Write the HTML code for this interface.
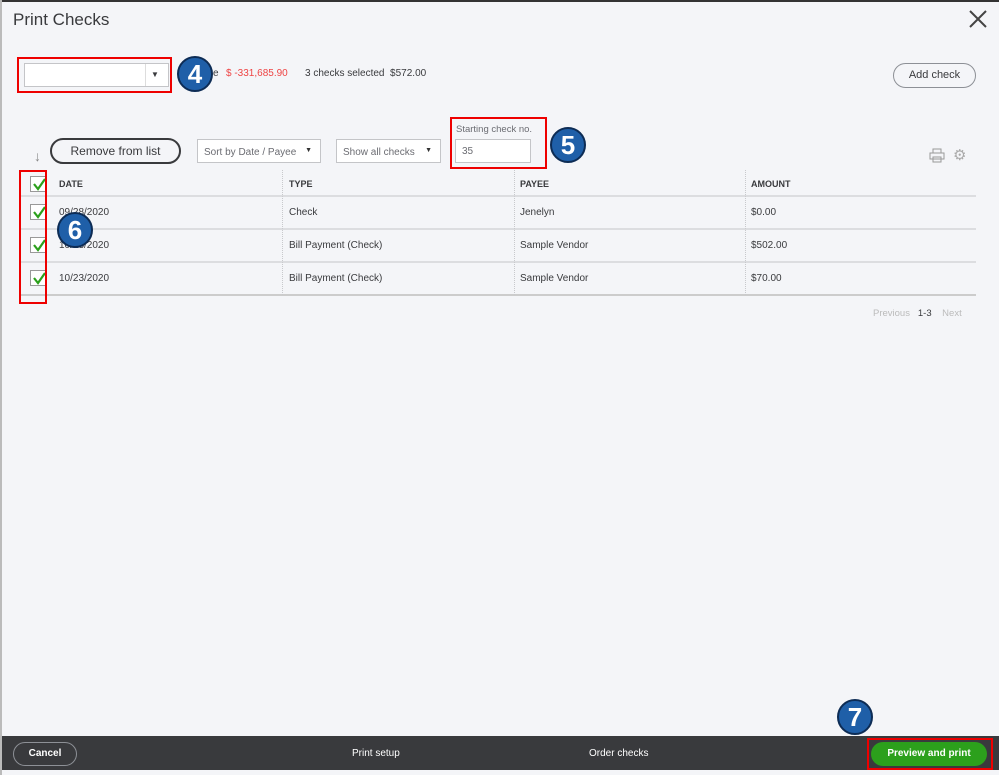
<!DOCTYPE html>
<html><head><meta charset="utf-8"><style>
*{margin:0;padding:0;box-sizing:border-box}
body{width:999px;height:775px;overflow:hidden;background:#f4f5f8;font-family:"Liberation Sans",sans-serif;position:relative;color:#393a3d}
.a{position:absolute}
.t{font-size:10px;color:#393a3d}
.red{border:2px solid #e00;position:absolute}
.num{position:absolute;width:36px;height:36px;border-radius:50%;background:#1f5fa8;border:2px solid #0d2c55;color:#fff;font-weight:bold;font-size:26px;text-align:center;line-height:32px}
.hl{position:absolute;left:20px;width:956px;height:2px;background:#dcdde0}
.vl{position:absolute;top:170px;height:125px;border-left:1px dotted #c8c9cc}
.cb{position:absolute;left:30px;width:16px;height:16px;border:1px solid #999;background:#fff}
.cb svg{position:absolute;left:1px;top:0}
.sel{position:absolute;height:24px;border:1px solid #c4c5c8;background:#fff;font-size:10px;color:#6b6c72;padding:7px 6px}
</style></head><body>
<div class="a" style="left:0;top:0;width:999px;height:2px;background:#333"></div>
<div class="a" style="left:0;top:0;width:2px;height:775px;background:#bbb"></div>
<div class="a" style="left:13px;top:10px;font-size:17px;color:#393a3d">Print Checks</div>
<svg class="a" style="left:968px;top:9px" width="20" height="20"><path d="M2 2L18 18M18 2L2 18" stroke="#444" stroke-width="2"/></svg>

<div class="red" style="left:17px;top:57px;width:155px;height:36px"></div>
<div class="a" style="left:24px;top:63px;width:145px;height:24px;background:#fff;border:1px solid #c4c5c8"></div>
<div class="a" style="left:145px;top:64px;width:1px;height:22px;background:#ddd"></div>
<div class="a" style="left:151px;top:70px;font-size:8px">▼</div>
<div class="num" style="left:177px;top:56px">4</div>
<div class="a t" style="left:213px;top:68px">e</div>
<div class="a t" style="left:226px;top:68px;color:#e44">$ -331,685.90</div>
<div class="a t" style="left:305px;top:68px">3 checks selected &nbsp;$572.00</div>
<div class="a" style="left:893px;top:63px;width:83px;height:25px;border:1px solid #8d9096;border-radius:13px;font-size:11px;text-align:center;line-height:23px">Add check</div>

<div class="a" style="left:34px;top:148px;font-size:14px;color:#888">↓</div>
<div class="a" style="left:50px;top:138px;width:131px;height:26px;border:2px solid #393a3d;border-radius:13px;font-size:12px;text-align:center;line-height:22px">Remove from list</div>
<div class="sel" style="left:197px;top:139px;width:124px">Sort by Date / Payee<span style="position:absolute;right:8px;font-size:7px;color:#333">▼</span></div>
<div class="sel" style="left:336px;top:139px;width:105px">Show all checks<span style="position:absolute;right:8px;font-size:7px;color:#333">▼</span></div>
<div class="red" style="left:450px;top:117px;width:97px;height:52px"></div>
<div class="a" style="left:456px;top:124px;font-size:9.5px;color:#6b6c72">Starting check no.</div>
<div class="a" style="left:455px;top:139px;width:76px;height:24px;background:#fff;border:1px solid #c4c5c8;font-size:10px;color:#6b6c72;padding:6px 6px">35</div>
<div class="num" style="left:550px;top:127px">5</div>
<svg class="a" style="left:929px;top:148px" width="16" height="16"><rect x="4" y="1" width="8" height="4" fill="none" stroke="#999"/><rect x="1" y="5" width="14" height="6" fill="none" stroke="#999"/><rect x="4" y="9" width="8" height="5" fill="none" stroke="#999"/></svg>
<div class="a" style="left:953px;top:146px;font-size:15px;color:#aaa">⚙</div>

<div class="hl" style="top:195px"></div>
<div class="hl" style="top:228px"></div>
<div class="hl" style="top:261px"></div>
<div class="hl" style="top:294px;background:#ccc"></div>
<div class="vl" style="left:282px"></div>
<div class="vl" style="left:514px"></div>
<div class="vl" style="left:745px"></div>
<div class="a" style="left:59px;top:179px;font-size:9px;font-weight:bold">DATE</div>
<div class="a" style="left:289px;top:179px;font-size:9px;font-weight:bold">TYPE</div>
<div class="a" style="left:520px;top:179px;font-size:9px;font-weight:bold">PAYEE</div>
<div class="a" style="left:751px;top:179px;font-size:9px;font-weight:bold">AMOUNT</div>
<div class="a t" style="left:59px;top:207px">09/28/2020</div><div class="a t" style="left:289px;top:207px">Check</div><div class="a t" style="left:520px;top:207px">Jenelyn</div><div class="a t" style="left:751px;top:207px">$0.00</div>
<div class="a t" style="left:59px;top:240px">10/23/2020</div><div class="a t" style="left:289px;top:240px">Bill Payment (Check)</div><div class="a t" style="left:520px;top:240px">Sample Vendor</div><div class="a t" style="left:751px;top:240px">$502.00</div>
<div class="a t" style="left:59px;top:273px">10/23/2020</div><div class="a t" style="left:289px;top:273px">Bill Payment (Check)</div><div class="a t" style="left:520px;top:273px">Sample Vendor</div><div class="a t" style="left:751px;top:273px">$70.00</div>
<div class="cb" style="top:176px"><svg width="14" height="14"><path d="M2 7L6 12L13 2" stroke="#2ca01c" stroke-width="2.2" fill="none"/></svg></div>
<div class="cb" style="top:204px"><svg width="14" height="14"><path d="M2 7L6 12L13 2" stroke="#2ca01c" stroke-width="2.2" fill="none"/></svg></div>
<div class="cb" style="top:237px"><svg width="14" height="14"><path d="M2 7L6 12L13 2" stroke="#2ca01c" stroke-width="2.2" fill="none"/></svg></div>
<div class="cb" style="top:270px"><svg width="14" height="14"><path d="M2 7L6 12L13 2" stroke="#2ca01c" stroke-width="2.2" fill="none"/></svg></div>
<div class="red" style="left:19px;top:170px;width:28px;height:134px"></div>
<div class="num" style="left:57px;top:212px">6</div>
<div class="a" style="left:873px;top:308px;font-size:9.5px;color:#bbb">Previous &nbsp;&nbsp;<span style="color:#393a3d">1-3</span> &nbsp;&nbsp; Next</div>

<div class="num" style="left:837px;top:699px">7</div>
<div class="a" style="left:2px;top:736px;width:997px;height:34px;background:#393a3d"></div>
<div class="a" style="left:13px;top:742px;width:64px;height:24px;border:1px solid #8d9096;border-radius:12px;color:#fff;font-size:10px;font-weight:bold;text-align:center;line-height:22px">Cancel</div>
<div class="a" style="left:352px;top:748px;color:#fff;font-size:10px">Print setup</div>
<div class="a" style="left:589px;top:748px;color:#fff;font-size:10px">Order checks</div>
<div class="red" style="left:867px;top:738px;width:126px;height:32px"></div>
<div class="a" style="left:871px;top:742px;width:116px;height:24px;background:#2ca01c;border-radius:12px;color:#fff;font-size:10px;font-weight:bold;text-align:center;line-height:24px">Preview and print</div>
</body></html>
